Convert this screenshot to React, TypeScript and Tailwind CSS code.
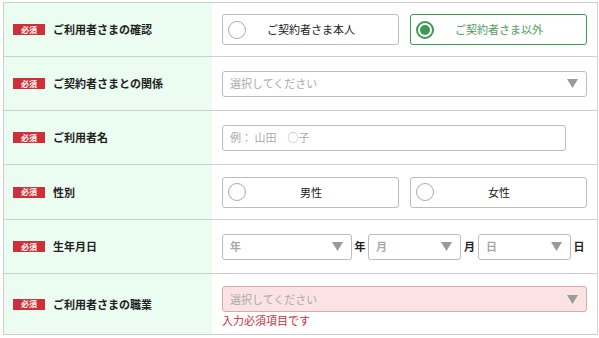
import type { ReactNode } from 'react'

const font = { fontFamily: '"Noto Sans CJK JP", "Noto Sans", sans-serif' }

function Badge() {
    return (
        <span className="inline-flex items-center justify-center w-[32px] h-[11px] bg-[#cf2f38] text-white text-[8px] font-bold leading-none shrink-0">
            必須
        </span>
    )
}

function Row({ label, children, last, h }: { label: string; children: ReactNode; last?: boolean; h: string }) {
    return (
        <div className={`flex ${h} ${last ? '' : 'border-b border-[#cfcfcf]'}`}>
            <div className="w-[208px] bg-[#ebfcf0] flex items-center pl-[9px] gap-[8px] shrink-0">
                <Badge />
                <span className="text-[11px] font-bold text-[#222]">{label}</span>
            </div>
            <div className="flex-1 bg-white pl-[10px] pr-[10px] flex flex-col justify-center">{children}</div>
        </div>
    )
}

function Arrow() {
    return (
        <svg width="11" height="9" viewBox="0 0 11 9" className="shrink-0">
            <path d="M0 0 L11 0 L5.5 9 Z" fill="#9a9a9a" />
        </svg>
    )
}

function Radio({ label, checked }: { label: string; checked?: boolean }) {
    return (
        <div
            className={`flex-1 h-[31px] rounded-[3px] border flex items-center px-[5px] ${
                checked ? 'border-[#3d9a4f] border-[1.5px]' : 'border-[#bdbdbd]'
            }`}
        >
            {checked ? (
                <span className="w-[18px] h-[18px] rounded-full border-2 border-[#3d9a4f] bg-white flex items-center justify-center shrink-0">
                    <span className="w-[10px] h-[10px] rounded-full bg-[#3d9a4f]" />
                </span>
            ) : (
                <span className="w-[18px] h-[18px] rounded-full border border-[#aaaaaa] bg-white shrink-0" />
            )}
            <span className={`flex-1 text-center text-[11px] pr-[17px] ${checked ? 'text-[#4c9c5c]' : 'text-[#222]'}`}>{label}</span>
        </div>
    )
}

function Select({ placeholder, className, error }: { placeholder: string; className?: string; error?: boolean }) {
    return (
        <div
            className={`h-[26px] rounded-[3px] border flex items-center justify-between pl-[7px] pr-[8px] ${
                error ? 'bg-[#fbe3e3] border-[#dba9a9]' : 'bg-white border-[#bdbdbd]'
            } ${className ?? ''}`}
        >
            <span className="text-[11px] text-[#aaaaaa]">{placeholder}</span>
            <Arrow />
        </div>
    )
}

export default function App() {
    return (
        <div className="w-[599px] h-[338px] bg-white pt-[2px] pl-[3px] pr-[1px]" style={font}>
            <div className="border border-[#cfcfcf]">
                <Row label="ご利用者さまの確認" h="h-[54px]">
                    <div className="flex gap-[11px]">
                        <Radio label="ご契約者さま本人" />
                        <Radio label="ご契約者さま以外" checked />
                    </div>
                </Row>
                <Row label="ご契約者さまとの関係" h="h-[54px]">
                    <Select placeholder="選択してください" />
                </Row>
                <Row label="ご利用者名" h="h-[54px]">
                    <div className="w-[344px] h-[26px] rounded-[3px] border border-[#bdbdbd] flex items-center pl-[7px] text-[11px] text-[#aaaaaa]">
                        例：&nbsp;山田　○子
                    </div>
                </Row>
                <Row label="性別" h="h-[55px]">
                    <div className="flex gap-[11px]">
                        <Radio label="男性" />
                        <Radio label="女性" />
                    </div>
                </Row>
                <Row label="生年月日" h="h-[54px]">
                    <div className="flex items-center text-[11px] font-bold text-[#222]">
                        <Select placeholder="年" className="w-[130px]" />
                        <span className="w-[16px] text-center">年</span>
                        <Select placeholder="月" className="w-[93px]" />
                        <span className="w-[17px] text-center">月</span>
                        <Select placeholder="日" className="w-[93px]" />
                        <span className="w-[16px] text-center">日</span>
                    </div>
                </Row>
                <Row label="ご利用者さまの職業" h="h-[60px]" last>
                    <div className="pt-[6px]">
                        <Select placeholder="選択してください" error />
                        <p className="text-[11px] text-[#c9303a] leading-[16px]">入力必須項目です</p>
                    </div>
                </Row>
            </div>
        </div>
    )
}
